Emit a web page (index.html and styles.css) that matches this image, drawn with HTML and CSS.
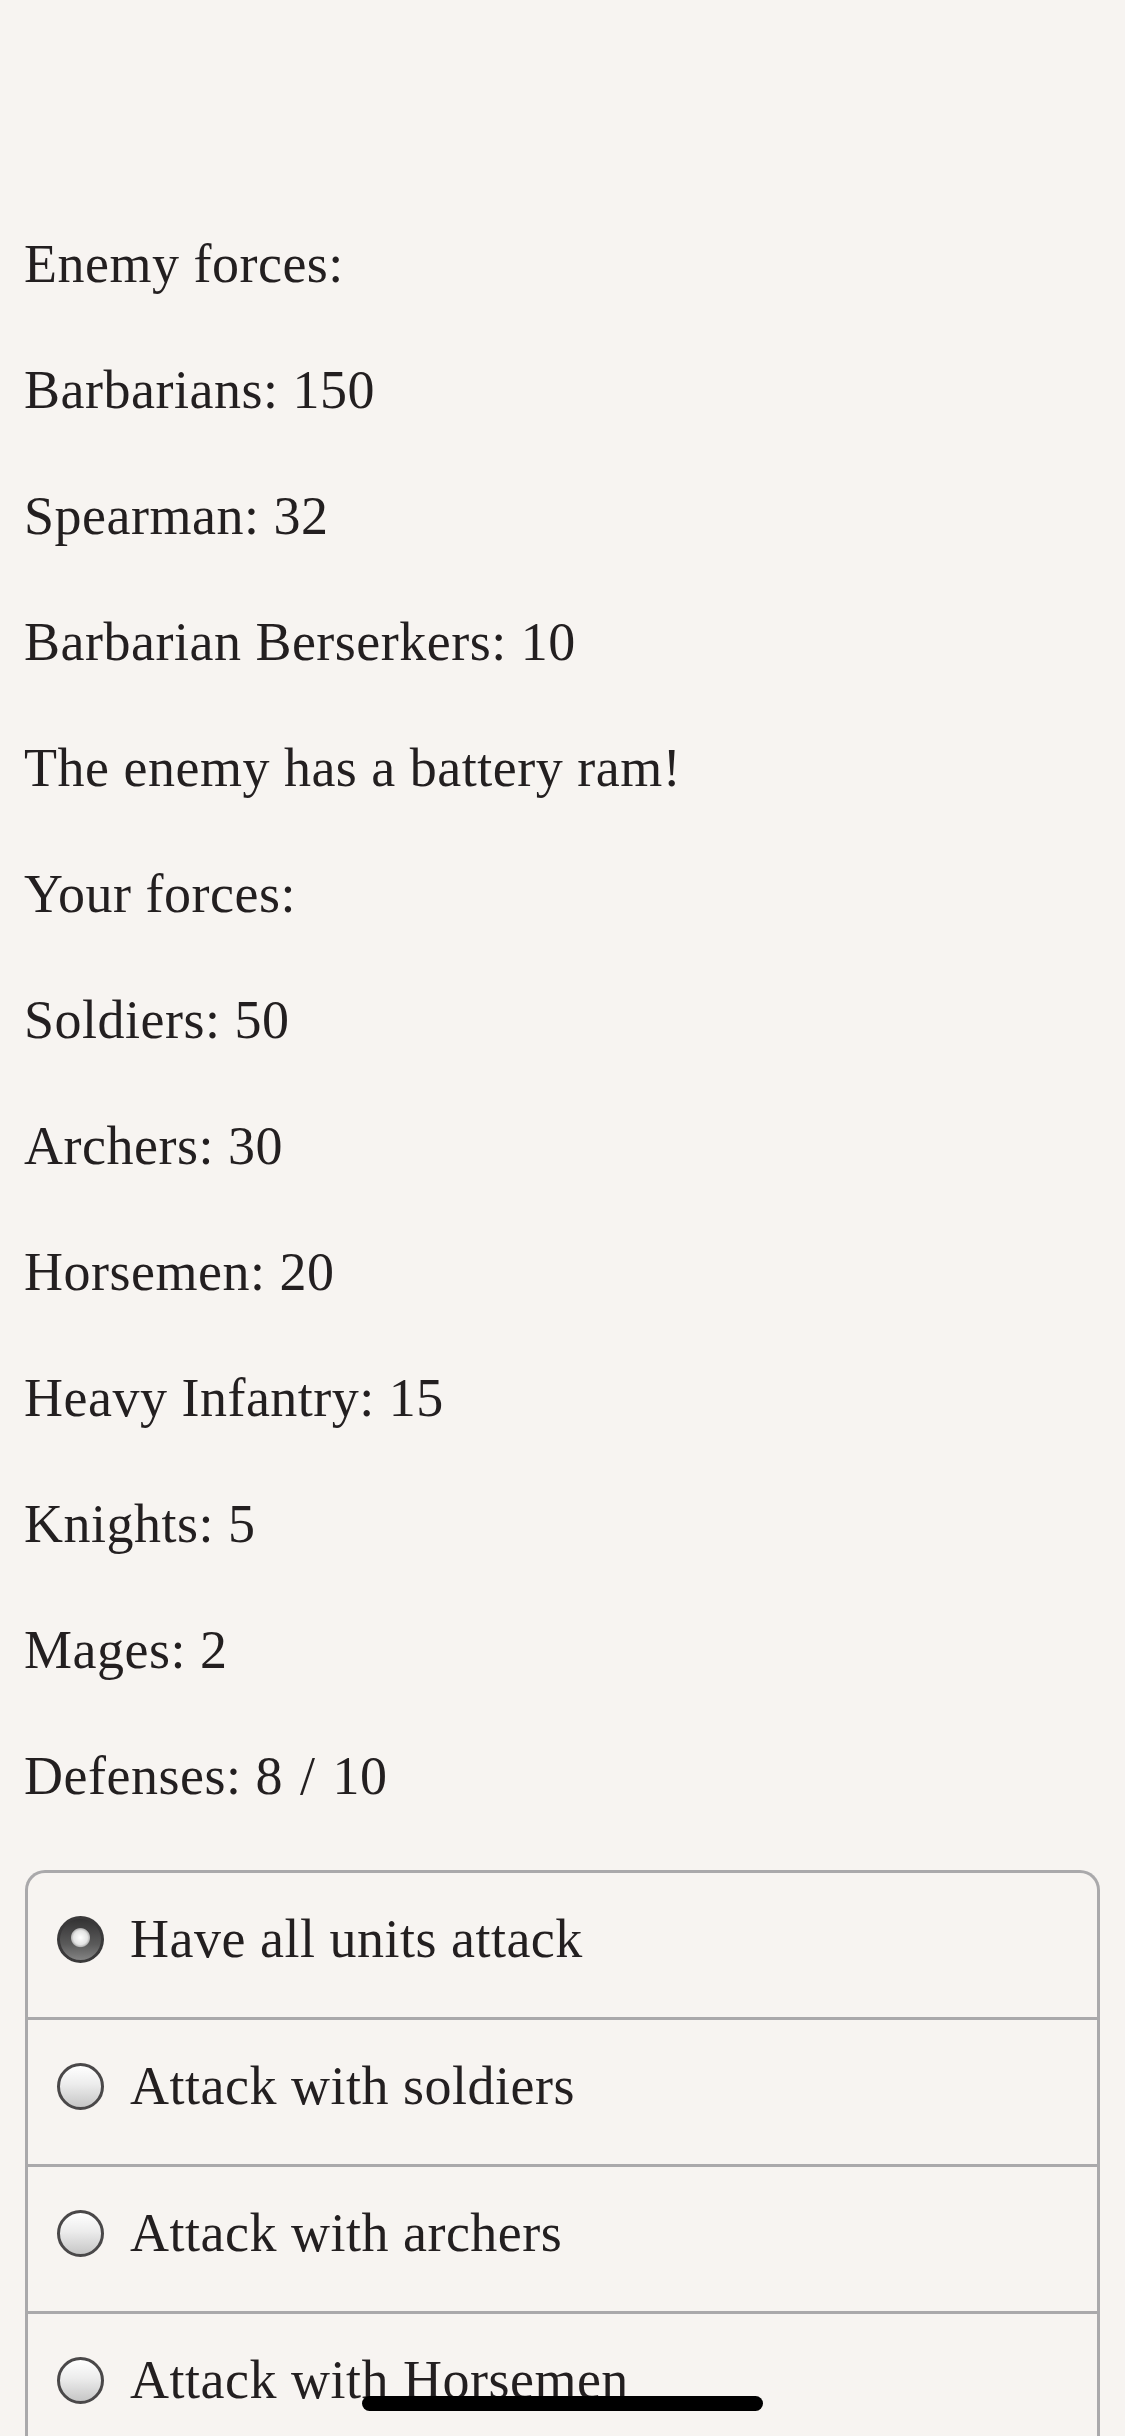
FILE: index.html
```html
<!DOCTYPE html>
<html lang="en">
<head>
  <meta charset="UTF-8">
  <meta name="viewport" content="width=device-width, initial-scale=1.0">
  <title>Battle</title>
  <link rel="stylesheet" href="styles.css">
</head>
<body>
  <main class="batalla">
    <div class="fuerzas">
      <p>Enemy forces:</p>
      <p>Barbarians: 150</p>
      <p>Spearman: 32</p>
      <p>Barbarian Berserkers: 10</p>
      <p>The enemy has a battery ram!</p>
      <p>Your forces:</p>
      <p>Soldiers: 50</p>
      <p>Archers: 30</p>
      <p>Horsemen: 20</p>
      <p>Heavy Infantry: 15</p>
      <p>Knights: 5</p>
      <p>Mages: 2</p>
      <p>Defenses: 8 <span class="barra">/</span> 10</p>
    </div>

    <div class="opciones">
      <label class="opcion"><input type="radio" name="ataque" checked><span>Have all units attack</span></label>
      <label class="opcion"><input type="radio" name="ataque"><span>Attack with soldiers</span></label>
      <label class="opcion"><input type="radio" name="ataque"><span>Attack with archers</span></label>
      <label class="opcion"><input type="radio" name="ataque"><span>Attack with Horsemen</span></label>
    </div>
  </main>

  <div class="home-bar"></div>
</body>
</html>
```

FILE: styles.css
```css
body {
  margin: 0;
  padding: 0;
  background-color: #f7f4f1;
  color: #231f20;
  font-family: "Liberation Serif", "DejaVu Serif", serif;
  font-size: 54px;
  letter-spacing: 0.5px;
}
.batalla {
  padding: 232px 25px 0 24px;
}
.fuerzas {
  display: flex;
  flex-direction: column;
  gap: 62px;
}
.fuerzas p {
  margin: 0;
  line-height: 64px;
}
.barra {
  margin: 0 3px;
}

.opciones {
  margin: 62px 0 0 1px;
  border: 3px solid #aaa9ab;
  border-bottom: none;
  border-radius: 20px 20px 0 0;
}
.opcion {
  display: flex;
  align-items: center;
  gap: 26px;
  height: 144px;
  box-sizing: content-box;
  padding: 0 29px;
  border-bottom: 3px solid #aaa9ab;
}
.opcion input {
  appearance: none;
  -webkit-appearance: none;
  margin: 0 0 12px;
  width: 47px;
  height: 47px;
  flex: none;
  border-radius: 50%;
  border: 3px solid #4a4849;
  background: linear-gradient(#ffffff, #ececec 45%, #c6c6c6);
  box-sizing: border-box;
}
.opcion input:checked {
  border: none;
  background:
    radial-gradient(circle at 50% 46%, #ffffff 0, #e4e4e4 7px, #b9b9b9 9px, transparent 10px),
    linear-gradient(#2f2e2f, #5a5a5a 60%, #8b8b8b);
  box-shadow: inset 0 0 0 3px #3a393a;
}
.opcion span {
  line-height: 64px;
  margin-bottom: 12px;
}

.home-bar {
  position: fixed;
  left: 362px;
  bottom: 25px;
  width: 401px;
  height: 15px;
  border-radius: 8px;
  background: #000;
}
```
